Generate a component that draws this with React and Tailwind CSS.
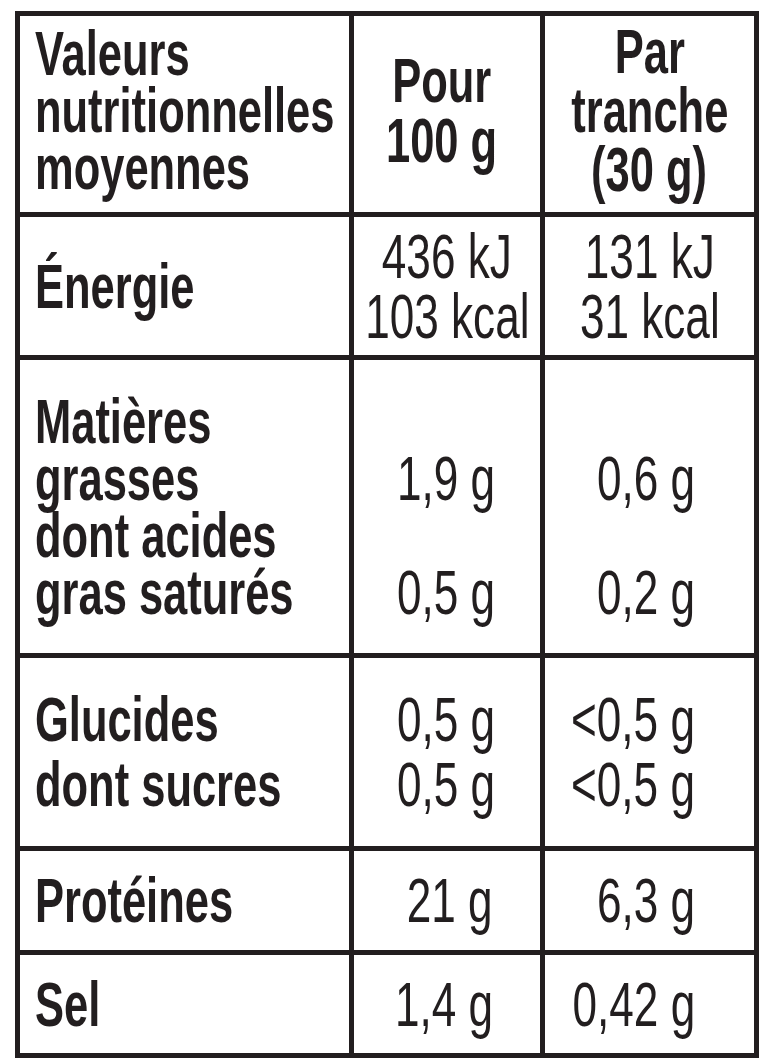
import React from 'react';

const ink = 'text-[#221e1f]';
const bold = 'font-bold [transform:scaleX(0.69)]';
const reg = '[transform:scaleX(0.7)]';

// label cell, left aligned bold
const Label = ({ lines, leading = 'leading-[57px]' }) => (
  <div className="bg-white flex items-center pl-[15px]">
    <div className={`origin-left whitespace-nowrap ${bold} ${leading}`}>
      {lines.map((l, i) => (
        <div key={i}>{l}</div>
      ))}
    </div>
  </div>
);

// value cell, right aligned regular
const Value = ({ lines, pr, leading = 'leading-[57px]' }) => (
  <div className={`bg-white flex items-center justify-end ${pr}`}>
    <div className={`origin-right whitespace-nowrap text-right ${reg} ${leading}`}>
      {lines.map((l, i) => (
        <div key={i}>{l || '\u00a0'}</div>
      ))}
    </div>
  </div>
);

const Center = ({ lines }) => (
  <div className="bg-white flex flex-col items-center justify-center">
    {lines.map((l, i) => (
      <div key={i} className={`whitespace-nowrap leading-[60px] ${reg}`}>
        {l}
      </div>
    ))}
  </div>
);

export default function App() {
  return (
    <div className={`min-h-[1064px] bg-white pt-[11px] pl-[15px] ${ink} font-['Liberation_Sans',sans-serif] text-[63px]`}>
      <div className="w-[744px] bg-[#221e1f] p-[5px] grid grid-cols-[329px_186px_209px] grid-rows-[196px_138px_293px_188px_99px_98px] gap-[5px]">
        {/* header */}
        <div className="bg-white flex items-center pl-[15px] pb-[8px]">
          <div className={`origin-left whitespace-nowrap leading-[57px] ${bold}`}>
            <div>Valeurs</div>
            <div>nutritionnelles</div>
            <div>moyennes</div>
          </div>
        </div>
        <div className="bg-white flex flex-col items-center justify-center pb-[8px] pr-[10px] leading-[60px]">
          <div className={`whitespace-nowrap ${bold}`}>Pour</div>
          <div className={`whitespace-nowrap ${bold}`}>100 g</div>
        </div>
        <div className="bg-white flex flex-col items-center justify-center pb-[8px] leading-[59px]">
          <div className={`whitespace-nowrap ${bold}`}>Par</div>
          <div className={`whitespace-nowrap ${bold}`}>tranche</div>
          <div className={`whitespace-nowrap ${bold}`}>(30 g)</div>
        </div>

        {/* energie */}
        <Label lines={['Énergie']} />
        <Center lines={['436 kJ', '103 kcal']} />
        <Center lines={['131 kJ', '31 kcal']} />

        {/* matieres grasses */}
        <Label lines={['Matières', 'grasses', 'dont acides', 'gras saturés']} />
        <Value lines={['', '1,9 g', '', '0,5 g']} pr="pr-[45px]" />
        <Value lines={['', '0,6 g', '', '0,2 g']} pr="pr-[59px]" />

        {/* glucides */}
        <Label lines={['Glucides', 'dont sucres']} leading="leading-[65px]" />
        <Value lines={['0,5 g', '0,5 g']} pr="pr-[45px]" leading="leading-[65px]" />
        <Value lines={['<0,5 g', '<0,5 g']} pr="pr-[59px]" leading="leading-[65px]" />

        {/* proteines */}
        <Label lines={['Protéines']} />
        <Value lines={['21 g']} pr="pr-[47px]" />
        <Value lines={['6,3 g']} pr="pr-[59px]" />

        {/* sel */}
        <Label lines={['Sel']} />
        <Value lines={['1,4 g']} pr="pr-[47px]" />
        <Value lines={['0,42 g']} pr="pr-[59px]" />
      </div>
    </div>
  );
}
